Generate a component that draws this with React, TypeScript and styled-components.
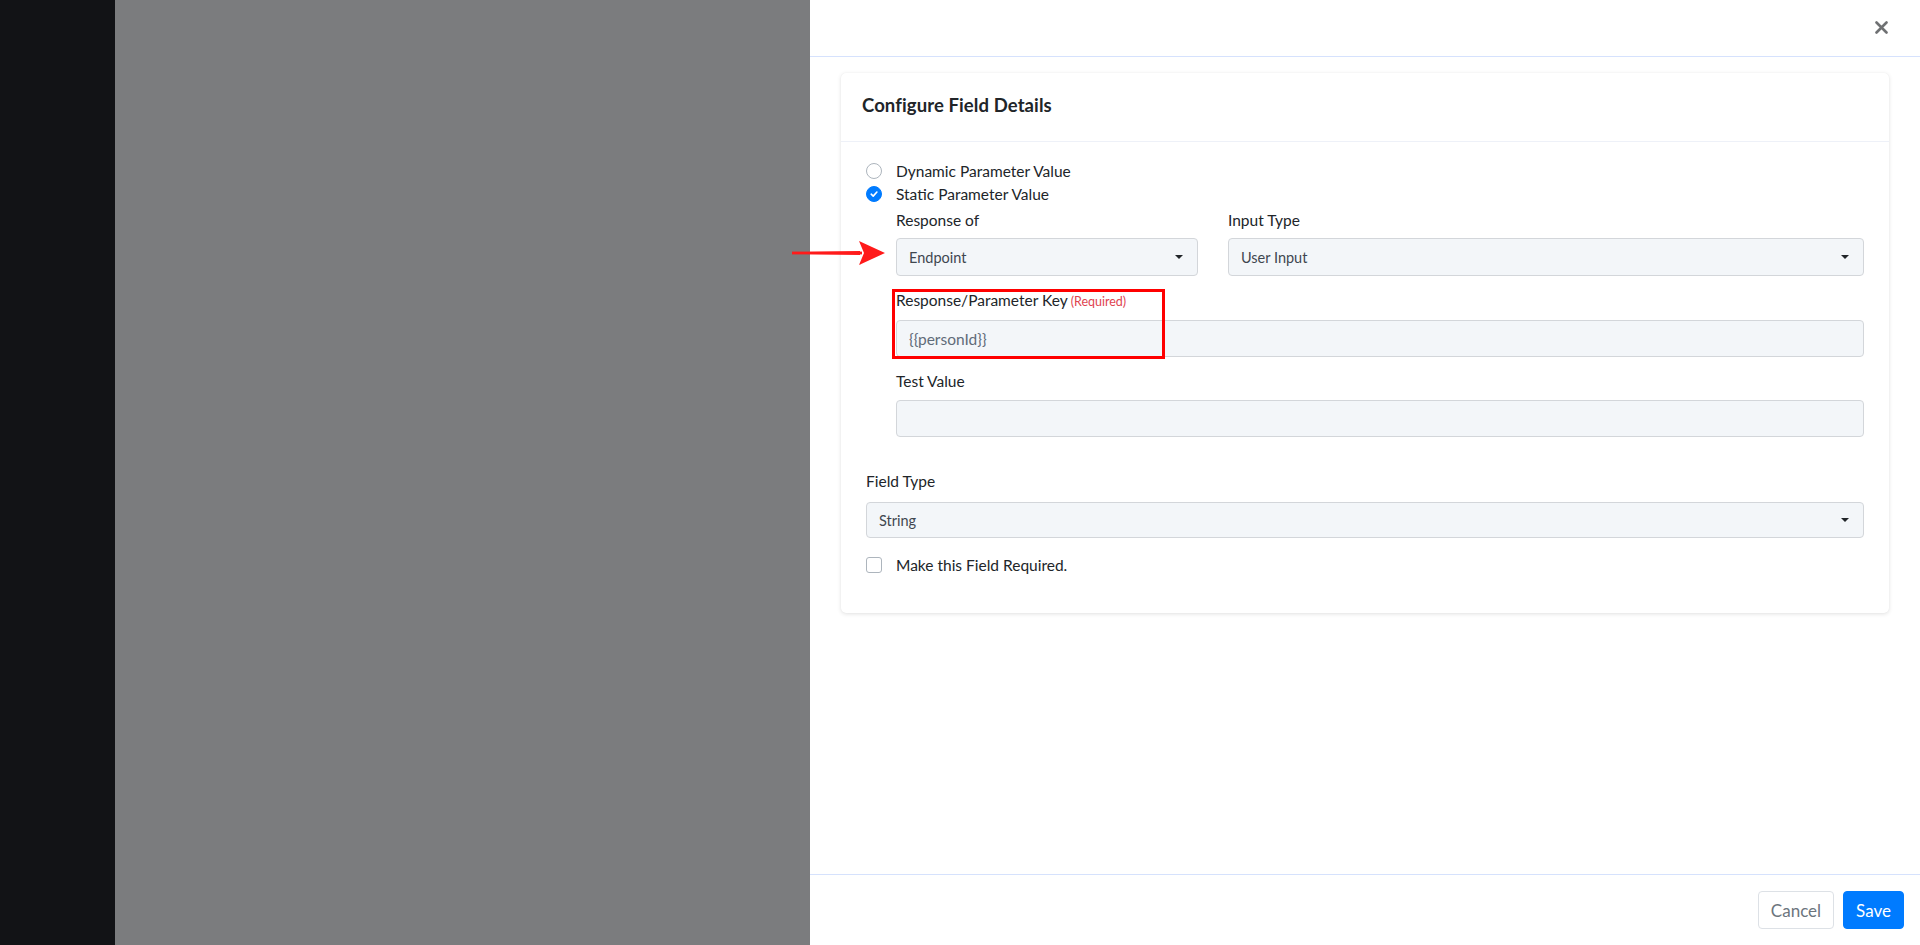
import React from "react";
import styled, { createGlobalStyle } from "styled-components";

const Global = createGlobalStyle`
  html, body { margin: 0; padding: 0; height: 100%; }
  body { font-family: Lato, "Noto Sans", "Liberation Sans", sans-serif; color: #212529; }
  #root { height: 100%; }
  * { box-sizing: border-box; }
`;

const Page = styled.div`
  display: flex;
  height: 945px;
  width: 1920px;
  overflow: hidden;
`;

const SideStrip = styled.div`
  width: 115px;
  flex: none;
  background: #121316;
`;

const Backdrop = styled.div`
  flex: 1;
  background: #7b7c7e;
`;

const Drawer = styled.aside`
  width: 1110px;
  flex: none;
  background: #fff;
  display: flex;
  flex-direction: column;
`;

const DrawerHeader = styled.div`
  height: 57px;
  border-bottom: 1px solid #d6e2fd;
  display: flex;
  align-items: center;
  justify-content: flex-end;
  padding: 0 32px 0 0;
  flex: none;
`;

const CloseBtn = styled.button`
  border: 0;
  background: transparent;
  padding: 0;
  display: flex;
  color: #6f7173;
  cursor: pointer;
  margin-top: -2px;
`;

const DrawerBody = styled.div`
  flex: 1;
  padding: 16px 31px;
`;

const Card = styled.div`
  background: #fff;
  border-radius: 5px;
  box-shadow: 0 1px 4px rgba(0, 0, 0, 0.12), 0 0 1px rgba(0, 0, 0, 0.06);
`;

const CardHeader = styled.div`
  height: 69px;
  padding: 0 21px 5px 21px;
  display: flex;
  align-items: center;
  border-bottom: 1px solid #eef1f8;
`;

const CardTitle = styled.h3`
  margin: 0;
  font-size: 18.5px;
  font-weight: 700;
  color: #212529;
  letter-spacing: 0.1px;
`;

const CardBody = styled.div`
  padding: 17px 25px 38px 25px;
`;

const OptionRow = styled.label`
  display: flex;
  align-items: center;
  height: 23px;
  font-size: 15.5px;
  color: #212529;
  gap: 14px;
  cursor: pointer;
`;

const RadioDot = styled.span<{ $checked?: boolean }>`
  width: 16px;
  height: 16px;
  border-radius: 50%;
  flex: none;
  display: flex;
  align-items: center;
  justify-content: center;
  border: 1px solid ${(p) => (p.$checked ? "#007bff" : "#adb5bd")};
  background: ${(p) => (p.$checked ? "#007bff" : "#fff")};
`;

const CheckBox = styled.span`
  width: 16px;
  height: 16px;
  border-radius: 3px;
  border: 1px solid #adb5bd;
  background: #fff;
  flex: none;
`;

const Indented = styled.div`
  margin: 5px 0 0 30px;
`;

const Row = styled.div`
  display: grid;
  grid-template-columns: 302px 1fr;
  column-gap: 30px;
  position: relative;
`;

const Group = styled.div<{ $mb?: number }>`
  position: relative;
  margin-bottom: ${(p) => p.$mb ?? 14}px;
`;

const Label = styled.div<{ $mb?: number }>`
  font-size: 15.5px;
  line-height: 21px;
  color: #212529;
  margin-bottom: ${(p) => p.$mb ?? 8}px;
`;

const Req = styled.span`
  font-size: 12.5px;
  color: #e0434f;
  margin-left: 3px;
`;

const SelectBox = styled.div<{ $h?: number }>`
  height: ${(p) => p.$h ?? 38}px;
  background: #f3f6f9;
  border: 1px solid #d3d6da;
  border-radius: 4px;
  display: flex;
  align-items: center;
  justify-content: space-between;
  padding: 0 12px;
  font-size: 14.5px;
  color: #3f4750;
`;

const Caret = styled.span`
  width: 0;
  height: 0;
  border-left: 4px solid transparent;
  border-right: 4px solid transparent;
  border-top: 4.5px solid #212529;
  margin-right: 2px;
`;

const InputBox = styled.div<{ $h?: number }>`
  height: ${(p) => p.$h ?? 37}px;
  background: #f3f6f9;
  border: 1px solid #d3d6da;
  border-radius: 4px;
  display: flex;
  align-items: center;
  padding: 0 12px;
  font-size: 15.5px;
  color: #5f6b78;
`;

const Highlight = styled.div`
  position: absolute;
  left: -4px;
  top: -1px;
  width: 273px;
  height: 70px;
  border: 3px solid #ff0000;
  pointer-events: none;
`;

const Arrow = styled.svg`
  position: absolute;
  left: -104px;
  top: 30px;
  pointer-events: none;
`;

const FieldType = styled.div`
  margin-top: 34px;
`;

const CheckRow = styled(OptionRow)`
  margin-top: 16px;
  height: 21px;
`;

const Footer = styled.div`
  height: 71px;
  border-top: 1px solid #d6e2fd;
  display: flex;
  align-items: center;
  justify-content: flex-end;
  gap: 9px;
  padding: 0 16px 0 0;
  flex: none;
`;

const Button = styled.button<{ $primary?: boolean }>`
  height: 38px;
  padding: 0 12px;
  border-radius: 4px;
  font-family: Lato, "Noto Sans", sans-serif;
  font-size: 17px;
  border: 1px solid ${(p) => (p.$primary ? "#007bff" : "#dde1e6")};
  background: ${(p) => (p.$primary ? "#007bff" : "#fff")};
  color: ${(p) => (p.$primary ? "#fff" : "#6c757d")};
  cursor: pointer;
`;

export default function App() {
  return (
    <>
      <Global />
      <Page>
        <SideStrip />
        <Backdrop />
        <Drawer>
          <DrawerHeader>
            <CloseBtn aria-label="Close">
              <svg width="13" height="13" viewBox="0 0 13 13">
                <path d="M1.5 1.5 L11.5 11.5 M11.5 1.5 L1.5 11.5" stroke="currentColor" strokeWidth="2.6" strokeLinecap="round" />
              </svg>
            </CloseBtn>
          </DrawerHeader>
          <DrawerBody>
            <Card>
              <CardHeader>
                <CardTitle>Configure Field Details</CardTitle>
              </CardHeader>
              <CardBody>
                <OptionRow>
                  <RadioDot />
                  Dynamic Parameter Value
                </OptionRow>
                <OptionRow>
                  <RadioDot $checked>
                    <svg width="10" height="10" viewBox="0 0 10 10">
                      <path d="M2.2 5.2 L4.2 7.1 L7.9 3" stroke="#fff" strokeWidth="1.6" fill="none" strokeLinecap="round" strokeLinejoin="round" />
                    </svg>
                  </RadioDot>
                  Static Parameter Value
                </OptionRow>
                <Indented>
                  <Row>
                    <Group>
                      <Label $mb={7}>Response of</Label>
                      <SelectBox>
                        <span>Endpoint</span>
                        <Caret />
                      </SelectBox>
                      <Arrow width="96" height="26" viewBox="0 0 96 26">
                        <path d="M0 12.2 L68 11 L68 12.2 Z M0 13.8 L68 15 L68 13.8 Z" fill="#ff1a1a" />
                        <path d="M67 1 L93 13 L67 25 L72 13 Z" fill="#ff1a1a" />
                        <rect x="0" y="11.6" width="70" height="2.8" fill="#ff1a1a" />
                      </Arrow>
                    </Group>
                    <Group>
                      <Label $mb={7}>Input Type</Label>
                      <SelectBox>
                        <span>User Input</span>
                        <Caret />
                      </SelectBox>
                    </Group>
                  </Row>
                  <Group>
                    <Label>
                      Response/Parameter Key<Req>(Required)</Req>
                    </Label>
                    <InputBox>{"{{personId}}"}</InputBox>
                    <Highlight />
                  </Group>
                  <Group $mb={0}>
                    <Label>Test Value</Label>
                    <InputBox />
                  </Group>
                </Indented>
                <FieldType>
                  <Label $mb={10}>Field Type</Label>
                  <SelectBox $h={36}>
                    <span>String</span>
                    <Caret />
                  </SelectBox>
                </FieldType>
                <CheckRow>
                  <CheckBox />
                  Make this Field Required.
                </CheckRow>
              </CardBody>
            </Card>
          </DrawerBody>
          <Footer>
            <Button>Cancel</Button>
            <Button $primary>Save</Button>
          </Footer>
        </Drawer>
      </Page>
    </>
  );
}
